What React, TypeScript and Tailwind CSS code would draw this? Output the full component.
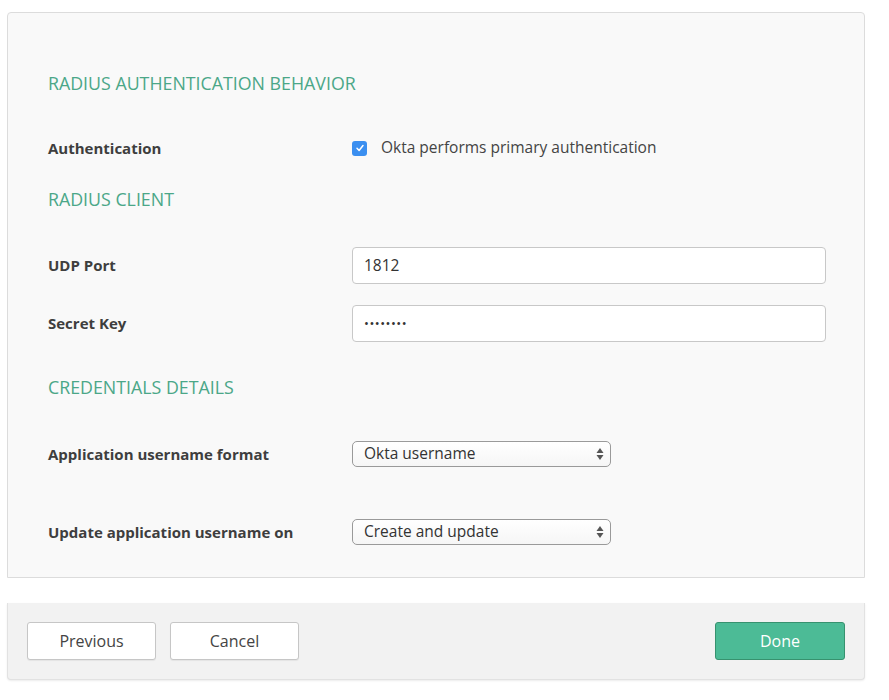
const font = { fontFamily: "'Open Sans', Lato, sans-serif" };

function SectionTitle({ children, className = "" }: { children: string; className?: string }) {
  return (
    <h2 className={`h-6 text-[17.8px] leading-6 font-normal text-[#4ba788] ${className}`}>{children}</h2>
  );
}

function Label({ children }: { children: string }) {
  return <div className="w-[304px] shrink-0 text-[15px] font-bold text-[#3e3e3e]">{children}</div>;
}

function SelectBox({ value }: { value: string }) {
  return (
    <div className="flex h-[26px] w-[259px] items-center justify-between rounded-[5px] border border-[#9a9a9a] bg-gradient-to-b from-white to-[#f6f6f6] pl-[11px] pr-[6px] text-[15.5px] text-[#333]">
      <span>{value}</span>
      <svg width="8" height="14" viewBox="0 0 8 14" className="text-[#555]">
        <path d="M4 1 L7.5 6 L0.5 6 Z" fill="currentColor" />
        <path d="M4 13 L7.5 8 L0.5 8 Z" fill="currentColor" />
      </svg>
    </div>
  );
}

function TextBox({ value, secret = false }: { value: string; secret?: boolean }) {
  return (
    <div className="flex h-[37px] w-[474px] items-center rounded-[4px] border border-[#c8c8c8] bg-white px-[11px] text-[15.5px] text-[#333]">
      {secret ? <span className="text-[13px] tracking-[0.5px]">{value}</span> : value}
    </div>
  );
}

export default function App() {
  return (
    <div className="min-h-[700px] bg-white pt-3" style={font}>
      {/* Settings panel */}
      <div className="mx-[7px] w-[858px] rounded-t-[4px] border border-[#dcdcdc] bg-[#f9f9f9] pt-[58px] pb-[32px] pl-[40px]">
        <SectionTitle>RADIUS AUTHENTICATION BEHAVIOR</SectionTitle>

        <div className="mt-[41px] flex h-6 items-center">
          <Label>Authentication</Label>
          <div className="flex items-center">
            <span className="flex h-[15px] w-[15px] items-center justify-center rounded-[3px] bg-[#3b8ff0]">
              <svg width="10" height="10" viewBox="0 0 10 10">
                <path d="M2 5.3 L4.1 7.5 L8 2.5" stroke="white" strokeWidth="1.5" fill="none" strokeLinecap="round" strokeLinejoin="round" />
              </svg>
            </span>
            <span className="ml-[14px] text-[15.5px] text-[#444]">Okta performs primary authentication</span>
          </div>
        </div>

        <SectionTitle className="mt-[27px]">RADIUS CLIENT</SectionTitle>

        <div className="mt-[36px] flex items-center">
          <Label>UDP Port</Label>
          <TextBox value="1812" />
        </div>
        <div className="mt-[21px] flex items-center">
          <Label>Secret Key</Label>
          <TextBox value="••••••••" secret />
        </div>

        <SectionTitle className="mt-[33px]">CREDENTIALS DETAILS</SectionTitle>

        <div className="mt-[42px] flex items-center">
          <Label>Application username format</Label>
          <SelectBox value="Okta username" />
        </div>
        <div className="mt-[52px] flex items-center">
          <Label>Update application username on</Label>
          <SelectBox value="Create and update" />
        </div>
      </div>

      {/* Footer bar */}
      <div className="mx-[7px] mt-[25px] flex h-[77px] w-[858px] items-center justify-between rounded-b-[4px] border border-t-0 border-[#e2e2e2] bg-[#f2f2f2] px-[19px] shadow-[0_1px_2px_rgba(0,0,0,0.08)]">
        <div className="flex gap-[14px]">
          <button className="h-[38px] w-[129px] rounded-[3px] border border-[#c6c6c6] bg-white text-[16px] text-[#444] shadow-[0_1px_1px_rgba(0,0,0,0.06)]">
            Previous
          </button>
          <button className="h-[38px] w-[129px] rounded-[3px] border border-[#c6c6c6] bg-white text-[16px] text-[#444] shadow-[0_1px_1px_rgba(0,0,0,0.06)]">
            Cancel
          </button>
        </div>
        <button className="h-[38px] w-[130px] rounded-[3px] border border-[#37926f] bg-[#4cbb96] text-[16px] text-white">
          Done
        </button>
      </div>
    </div>
  );
}
